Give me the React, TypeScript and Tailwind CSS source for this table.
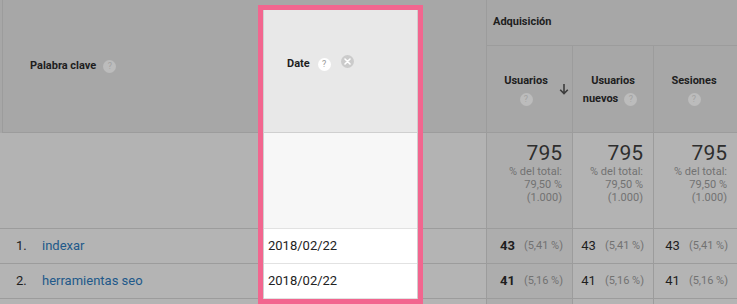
import React from "react";

const Q = ({ light }: { light?: boolean }) => (
  <span
    className={
      "inline-flex items-center justify-center w-[13px] h-[13px] rounded-full text-[9px] leading-none font-normal " +
      (light ? "bg-white text-[#9a9a9a]" : "bg-[#bcbcbc] text-[#a2a2a2]")
    }
  >
    ?
  </span>
);

const Close = () => (
  <svg width="13" height="13" viewBox="0 0 13 13">
    <circle cx="6.5" cy="6.5" r="6.5" fill="#cbcbcb" />
    <path d="M4 4 L9 9 M9 4 L4 9" stroke="#ffffff" strokeWidth="1.6" strokeLinecap="round" />
  </svg>
);

const ArrowDown = () => (
  <svg width="10" height="12" viewBox="0 0 10 12">
    <path d="M5 1 V10.5 M1.2 6.8 L5 10.6 L8.8 6.8" stroke="#3c3c3c" strokeWidth="1.6" fill="none" />
  </svg>
);

const Total = ({ dark }: { dark?: boolean }) => (
  <div
    className={
      "h-[95px] flex flex-col items-end pr-[10px] pt-[8px] " +
      (dark ? "bg-[#adadad]" : "bg-[#b3b3b3]")
    }
  >
    <div className="text-[21px] leading-[24px] text-[#2e2e2e]">795</div>
    <div className="text-[11px] leading-[13px] text-[#727272] text-right">
      <div>% del total:</div>
      <div>79,50 %</div>
      <div>(1.000)</div>
    </div>
  </div>
);

const Val = ({ v, p, dark, bold }: { v: string; p: string; dark?: boolean; bold?: boolean }) => (
  <div
    className={
      "h-[35px] flex items-center justify-end pr-[9px] gap-[9px] border-t border-[#9c9c9c]" +
      (dark ? " bg-[#adadad]" : " bg-[#b4b4b4]")
    }
  >
    <span className={"text-[13px] text-[#1e1e1e] " + (bold ? "font-bold" : "font-normal")}>{v}</span>
    <span className="text-[11px] text-[#727272]">{p}</span>
  </div>
);

export default function App() {
  return (
    <div className="w-[737px] h-[304px] overflow-hidden bg-[#a7a7a7] flex font-['Roboto','Liberation_Sans',sans-serif] text-[#1e1e1e]">
      {/* Palabra clave column */}
      <div className="w-[258px] flex flex-col shrink-0">
        <div className="h-[133px] ml-[2px] border-l border-b border-[#9c9c9c] flex items-center pl-[27px] gap-[7px]">
          <span className="text-[11px] font-bold">Palabra clave</span>
          <Q />
        </div>
        <div className="h-[95px] bg-[#b3b3b3]" />
        <div className="h-[35px] border-t border-[#9c9c9c] bg-[#b4b4b4] flex items-center text-[13px]">
          <span className="w-[42px] pl-[16px]">1.</span>
          <span className="text-[#21598a]">indexar</span>
        </div>
        <div className="h-[35px] border-t border-[#9c9c9c] bg-[#b4b4b4] flex items-center text-[13px]">
          <span className="w-[42px] pl-[16px]">2.</span>
          <span className="text-[#21598a]">herramientas seo</span>
        </div>
        <div className="flex-1 border-t border-[#9c9c9c] bg-[#b4b4b4]" />
      </div>

      {/* Date column highlighted */}
      <div className="w-[165px] shrink-0 pt-[5px]">
        <div className="h-[299px] border-[5px] border-[#f2668f] flex flex-col">
          <div className="flex-1 flex flex-col border-x border-[#cfcfcf]">
            <div className="h-[123px] bg-[#e8e8e8] border-b border-[#cfcfcf] flex items-center pl-[23px] pb-[13px]">
              <span className="text-[11px] font-bold">Date</span>
              <span className="ml-[8px] flex">
                <Q light />
              </span>
              <span className="ml-[10px] -mt-[6px] flex">
                <Close />
              </span>
            </div>
            <div className="h-[95px] bg-[#f7f7f7]" />
            <div className="h-[35px] bg-white border-t border-[#e2e2e2] flex items-center pl-[4px] text-[13px] text-[#222]">
              2018/02/22
            </div>
            <div className="h-[36px] bg-white border-y border-[#e2e2e2] flex items-center pl-[4px] text-[13px] text-[#222]">
              2018/02/22
            </div>
          </div>
        </div>
      </div>

      {/* Spacer column */}
      <div className="w-[63px] shrink-0 flex flex-col">
        <div className="h-[133px] border-b border-[#9c9c9c]" />
        <div className="h-[95px] bg-[#b3b3b3]" />
        <div className="h-[35px] border-t border-[#9c9c9c] bg-[#b4b4b4]" />
        <div className="h-[35px] border-t border-[#9c9c9c] bg-[#b4b4b4]" />
        <div className="flex-1 border-t border-[#9c9c9c] bg-[#b4b4b4]" />
      </div>

      {/* Adquisición */}
      <div className="flex-1 border-l border-[#9c9c9c] flex flex-col">
        <div className="h-[46px] border-b border-[#9c9c9c] flex items-center pl-[6px]">
          <span className="text-[11px] font-bold">Adquisición</span>
        </div>
        <div className="flex flex-1">
          {/* Usuarios */}
          <div className="w-[86px] border-r border-[#9c9c9c] flex flex-col">
            <div className="h-[87px] border-b border-[#9c9c9c] relative flex flex-col items-center pt-[26px] pr-[7px]">
              <span className="text-[11px] font-bold leading-[18px]">Usuarios</span>
              <span className="h-[18px] flex items-center">
                <Q />
              </span>
              <span className="absolute right-[3px] top-[37px]">
                <ArrowDown />
              </span>
            </div>
            <Total dark />
            <Val v="43" p="(5,41 %)" dark bold />
            <Val v="41" p="(5,16 %)" dark bold />
            <div className="flex-1 border-t border-[#9c9c9c] bg-[#adadad]" />
          </div>
          {/* Usuarios nuevos */}
          <div className="w-[81px] border-r border-[#9c9c9c] flex flex-col">
            <div className="h-[87px] border-b border-[#9c9c9c] flex flex-col items-center pt-[26px]">
              <span className="text-[11px] font-bold leading-[18px]">Usuarios</span>
              <span className="text-[11px] font-bold leading-[18px] flex items-center gap-[6px] pr-[6px]">
                nuevos <Q />
              </span>
            </div>
            <Total />
            <Val v="43" p="(5,41 %)" />
            <Val v="41" p="(5,16 %)" />
            <div className="flex-1 border-t border-[#9c9c9c] bg-[#b4b4b4]" />
          </div>
          {/* Sesiones */}
          <div className="flex-1 flex flex-col">
            <div className="h-[87px] border-b border-[#9c9c9c] flex flex-col items-center pt-[26px] pr-[3px]">
              <span className="text-[11px] font-bold leading-[18px]">Sesiones</span>
              <span className="h-[18px] flex items-center">
                <Q />
              </span>
            </div>
            <Total />
            <Val v="43" p="(5,41 %)" />
            <Val v="41" p="(5,16 %)" />
            <div className="flex-1 border-t border-[#9c9c9c] bg-[#b4b4b4]" />
          </div>
        </div>
      </div>
    </div>
  );
}
